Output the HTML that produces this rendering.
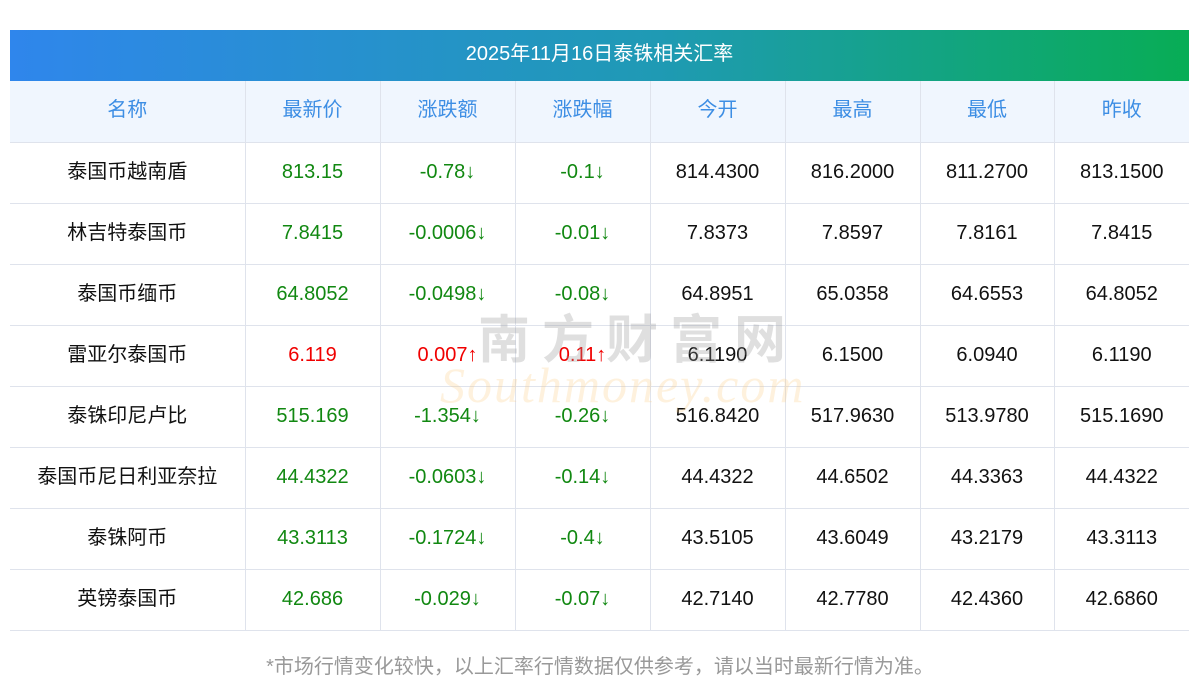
<!DOCTYPE html>
<html><head><meta charset="utf-8"><style>
body{margin:0;background:#fff;width:1200px;height:697px;position:relative;overflow:hidden;font-family:"Liberation Sans","Noto Sans CJK SC",sans-serif}
.title{position:absolute;left:10px;top:30px;width:1179px;height:51px;background:linear-gradient(90deg,#2f86ec,#1f9ab4 55%,#08ad55);color:#fff;font-size:20px;line-height:49px;text-align:center}
table{position:absolute;left:10px;top:81px;border-collapse:collapse;width:1179px;table-layout:fixed}
td{height:61px;border-bottom:1px solid #dfe3ec;border-right:1px solid #dfe3ec;text-align:center;font-size:20px;line-height:20px;color:#111;padding:0 0 2px 0;box-sizing:border-box}
td:last-child{border-right:none}
tr.h td{background:#f0f6fe;color:#3d8ee4;height:61px}
.c{font-family:"Noto Sans CJK SC",sans-serif;padding-bottom:6px}
.g{color:#118811}.r{color:#f00000}
.wm{position:absolute;left:478px;top:298px;font-size:52px;color:rgba(150,150,150,.3);letter-spacing:12px;font-weight:bold}
.wm2{position:absolute;left:440px;top:356px;font-size:50px;color:rgba(250,200,120,.25);font-style:italic;font-family:"Liberation Serif",serif;letter-spacing:2px}
.foot{position:absolute;top:650px;left:0;width:1200px;text-align:center;color:#999;font-size:20px}
</style></head><body>
<div class="title">2025年11月16日泰铢相关汇率</div>
<table>
<colgroup><col style="width:235px"><col style="width:135px"><col style="width:135px"><col style="width:135px"><col style="width:135px"><col style="width:135px"><col style="width:134px"><col style="width:135px"></colgroup>
<tr class="h"><td class="c">名称</td><td class="c">最新价</td><td class="c">涨跌额</td><td class="c">涨跌幅</td><td class="c">今开</td><td class="c">最高</td><td class="c">最低</td><td class="c">昨收</td></tr>
<tr><td class="c">泰国币越南盾</td><td class="g">813.15</td><td class="g">-0.78↓</td><td class="g">-0.1↓</td><td>814.4300</td><td>816.2000</td><td>811.2700</td><td>813.1500</td></tr>
<tr><td class="c">林吉特泰国币</td><td class="g">7.8415</td><td class="g">-0.0006↓</td><td class="g">-0.01↓</td><td>7.8373</td><td>7.8597</td><td>7.8161</td><td>7.8415</td></tr>
<tr><td class="c">泰国币缅币</td><td class="g">64.8052</td><td class="g">-0.0498↓</td><td class="g">-0.08↓</td><td>64.8951</td><td>65.0358</td><td>64.6553</td><td>64.8052</td></tr>
<tr><td class="c">雷亚尔泰国币</td><td class="r">6.119</td><td class="r">0.007↑</td><td class="r">0.11↑</td><td>6.1190</td><td>6.1500</td><td>6.0940</td><td>6.1190</td></tr>
<tr><td class="c">泰铢印尼卢比</td><td class="g">515.169</td><td class="g">-1.354↓</td><td class="g">-0.26↓</td><td>516.8420</td><td>517.9630</td><td>513.9780</td><td>515.1690</td></tr>
<tr><td class="c">泰国币尼日利亚奈拉</td><td class="g">44.4322</td><td class="g">-0.0603↓</td><td class="g">-0.14↓</td><td>44.4322</td><td>44.6502</td><td>44.3363</td><td>44.4322</td></tr>
<tr><td class="c">泰铢阿币</td><td class="g">43.3113</td><td class="g">-0.1724↓</td><td class="g">-0.4↓</td><td>43.5105</td><td>43.6049</td><td>43.2179</td><td>43.3113</td></tr>
<tr><td class="c">英镑泰国币</td><td class="g">42.686</td><td class="g">-0.029↓</td><td class="g">-0.07↓</td><td>42.7140</td><td>42.7780</td><td>42.4360</td><td>42.6860</td></tr>
</table>
<div class="wm">南方财富网</div>
<div class="wm2">Southmoney.com</div>
<div class="foot">*市场行情变化较快，以上汇率行情数据仅供参考，请以当时最新行情为准。</div>
</body></html>
